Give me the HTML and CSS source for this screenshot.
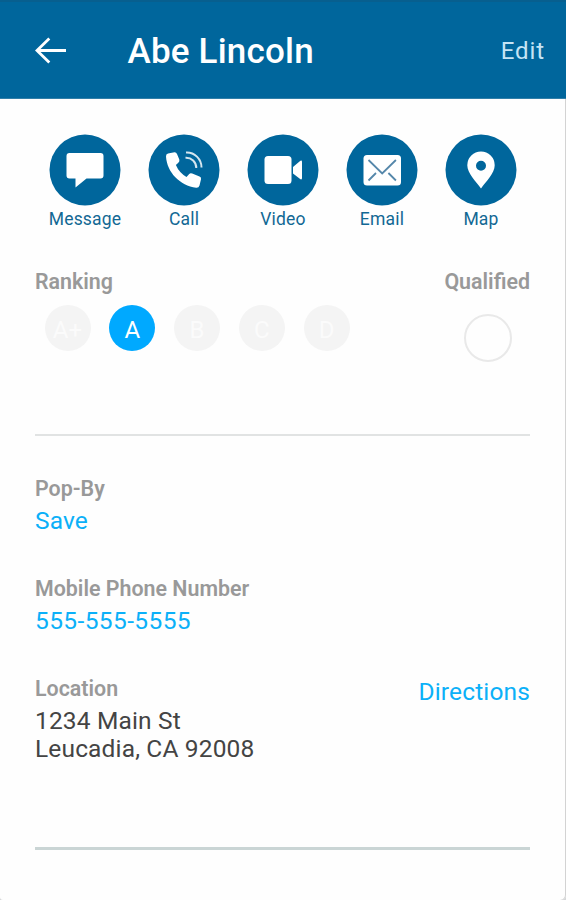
FILE: index.html
```html
<!DOCTYPE html>
<html lang="en">
<head>
<meta charset="utf-8">
<title>Abe Lincoln</title>
<link rel="stylesheet" href="styles.css">
</head>
<body>
<div class="screen">
  <header class="bar">
    <svg class="back" width="32" height="28" viewBox="0 0 32 28"><path d="M31 13.500H2M14.300 1.500 2 13.500l12.300 12"/></svg>
    <h1 class="title">Abe Lincoln</h1>
    <a class="edit">Edit</a>
  </header>
  <main class="content">
    <nav class="actions">
      <a class="action">
        <svg class="disc" viewBox="0 0 72 72"><circle cx="36" cy="36" r="35.5"/><path class="fill" d="M20.500 19H51.500Q54.500 19 54.500 22V41.500Q54.500 44.500 51.500 44.500H37.500L26.500 53.500V44.500H20.500Q17.500 44.500 17.500 41.500V22Q17.500 19 20.500 19Z"/></svg>
        <span class="name">Message</span>
      </a>
      <a class="action">
        <svg class="disc" viewBox="0 0 72 72"><circle cx="36" cy="36" r="35.500"/><path class="fill" d="M20 19.500 26.500 18.300Q28.300 18.200 29 20L31.300 25.500Q31.900 27.500 30.300 28.800L27.900 31Q31 38.500 38.500 43L41 40.300Q42.300 38.800 44.200 39.600L51.500 42.500Q53.500 43.300 53 45.300L51.500 51.500Q50.800 54 48.200 53.800C32 51.500 19 38.500 18 22.500Q17.800 20 20 19.500Z"/><path class="wave" d="M38 18.500C46.500 18 53.500 25 53.500 33.500M37.500 23.800C43.500 23.500 48.300 28 48.300 34"/></svg>
        <span class="name">Call</span>
      </a>
      <a class="action">
        <svg class="disc" viewBox="0 0 72 72"><circle cx="36" cy="36" r="35.500"/><rect class="fill" x="17.500" y="22" width="27" height="28" rx="3.500"/><path class="fill" d="M46 33 52.500 27.500Q55 25.500 55 28V44Q55 46.500 52.500 44.500L46 39.500Z"/></svg>
        <span class="name">Video</span>
      </a>
      <a class="action">
        <svg class="disc" viewBox="0 0 72 72"><circle cx="36" cy="36" r="35.500"/><rect class="fill" x="17.500" y="21" width="37.500" height="30.500" rx="3.500"/><path class="fold" d="M22.500 26 36.200 39.500 49.900 26M22.500 46.500 30 39M42.400 39 49.900 46.500"/></svg>
        <span class="name">Email</span>
      </a>
      <a class="action">
        <svg class="disc" viewBox="0 0 72 72"><circle cx="36" cy="36" r="35.500"/><path class="fill" fill-rule="evenodd" d="M36 54.500C31 47.500 22.300 39.500 22.300 31.300A13.700 13.700 0 0 1 49.700 31.300C49.700 39.500 41 47.500 36 54.500ZM36 26.700A5 5 0 1 0 36 36.700A5 5 0 1 0 36 26.700Z"/></svg>
        <span class="name">Map</span>
      </a>
    </nav>

    <section class="rating">
      <div class="ranking">
        <h2 class="label">Ranking</h2>
        <div class="grades">
          <span class="grade">A+</span>
          <span class="grade selected">A</span>
          <span class="grade">B</span>
          <span class="grade">C</span>
          <span class="grade">D</span>
        </div>
      </div>
      <div class="qualified">
        <h2 class="label">Qualified</h2>
        <span class="check"></span>
      </div>
    </section>

    <section class="details">
      <div class="field">
        <h2 class="label">Pop-By</h2>
        <a class="value link">Save</a>
      </div>
      <div class="field">
        <h2 class="label">Mobile Phone Number</h2>
        <a class="value link phone">555-555-5555</a>
      </div>
      <div class="field place">
        <div>
          <h2 class="label">Location</h2>
          <p class="value address">1234 Main St<br>Leucadia, CA 92008</p>
        </div>
        <a class="link directions">Directions</a>
      </div>
    </section>
  </main>
</div>
</body>
</html>
```
FILE: styles.css
```css
* { box-sizing: border-box; margin: 0; padding: 0; }
body { background: #d5d7d8; font-family: Roboto, "Liberation Sans", sans-serif; }
.screen { height: 900px; }
.bar {
  display: flex;
  align-items: center;
  height: 99px;
  padding: 2px 21px 0 35px;
  background: #00669c;
  border-top: 2px solid #075f8f;
  border-bottom: 1px solid #307fa9;
  color: #fff;
}
.back { fill: none; stroke: #fff; stroke-width: 2.8; }
.title { margin: 1px 0 0 60.5px; font-size: 35px; font-weight: 500; line-height: 40px; letter-spacing: 0.2px; }
.edit { margin-left: auto; font-size: 24px; line-height: 28px; color: #c5e4f5; letter-spacing: 0.9px; }
.content {
  height: 801px;
  padding: 35px 36px 0 35px;
  background: #fefefe;
  box-shadow: inset -1px 0 #d3d3d3;
  border-radius: 0 0 5px 3px;
}
.actions { display: flex; justify-content: space-between; padding: 0 13px 0 14px; }
.action { display: flex; flex-direction: column; align-items: center; width: 72px; }
.disc { width: 72px; height: 72px; fill: #00669c; }
.fill { fill: #fff; }
.wave { fill: none; stroke: #d5e6ef; stroke-width: 2; }
.fold { fill: none; stroke: #5587aa; stroke-width: 1.8; }
.name { margin-top: 3px; font-size: 17.5px; line-height: 20px; color: #126894; letter-spacing: 0.2px; }
.label { font-size: 21.4px; font-weight: 600; line-height: 28px; color: #999; }
.rating {
  display: flex;
  justify-content: space-between;
  height: 168px;
  margin-top: 39px;
  border-bottom: 2px solid #e1e3e3;
}
.grades { display: flex; gap: 18.8px; margin: 9px 0 0 9.5px; }
.grade {
  width: 46px;
  height: 46px;
  border-radius: 50%;
  background: #f4f4f4;
  color: #fbfbfb;
  font-size: 24px;
  line-height: 50px;
  text-align: center;
}
.selected { background: #00a9ff; color: #fff; }
.qualified { display: flex; flex-direction: column; align-items: flex-end; }
.check { width: 48px; height: 48px; margin: 18px 18px 0 0; border: 2px solid #e9e9e9; border-radius: 50%; }
.details { height: 414px; padding-top: 39px; border-bottom: 3px solid #cad5d5; }
.field { height: 100px; }
.place { display: flex; justify-content: space-between; }
.value { display: block; margin-top: 4px; font-size: 24.5px; line-height: 28.4px; letter-spacing: 0.1px; }
.link { color: #0bb0f8; }
.phone { letter-spacing: 0.4px; }
.address { color: #444; letter-spacing: 0.15px; }
.directions { margin-top: 3px; font-size: 24.5px; line-height: 28px; letter-spacing: 0.15px; }
```
